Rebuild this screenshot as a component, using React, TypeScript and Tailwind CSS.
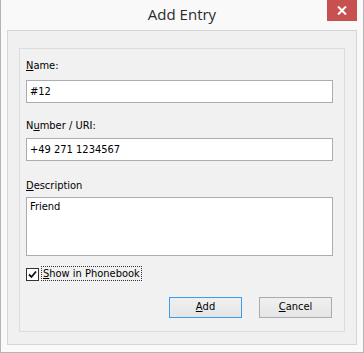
import { FC, ReactNode } from 'react';

const font = { fontFamily: '"DejaVu Sans Condensed", "Liberation Sans", Arial, sans-serif' };

const Label: FC<{ children: ReactNode; className?: string }> = ({ children, className }) => (
  <div className={`h-[14px] text-[11px] leading-[14px] text-black ${className ?? ''}`}>{children}</div>
);

const Field: FC<{ value: string; className?: string }> = ({ value, className }) => (
  <div
    className={`h-[23px] w-[307px] border border-[#abadb3] bg-white px-[3px] text-[11px] leading-[21px] text-black ${className ?? ''}`}
  >
    {value}
  </div>
);

const App: FC = () => {
  return (
    <div
      className="flex h-[353px] w-[364px] flex-col border-x border-b border-[#b4b4b4] bg-[#f9f9f9]"
      style={font}
    >
      <div className="grid h-[30px] grid-cols-[1fr_auto_1fr]">
        <div />
        <div
          className="pt-[4px] text-[15px] leading-[20px] text-[#2b2b2b]"
          style={{ fontFamily: '"Open Sans", "Noto Sans", sans-serif' }}
        >
          Add Entry
        </div>
        <div className="flex justify-end pr-[6px]">
          <div className="flex h-[21px] w-[30px] items-center justify-center bg-[#c75050]">
            <svg width="10" height="9" viewBox="0 0 10 9">
              <path d="M1 0.5 L9 8.5 M9 0.5 L1 8.5" stroke="white" strokeWidth="2" />
            </svg>
          </div>
        </div>
      </div>

      <div className="mx-[6px] mb-[7px] flex-1 border border-[#d5d5d5] bg-[#f0f0f0] px-[11px] pb-[12px] pt-[17px]">
        <div className="h-full border border-[#dcdcdc] bg-[#f1f1f1] pl-[6px] pr-[11px] pt-[10px]">
          <Label>
            <span className="underline">N</span>ame:
          </Label>
          <Field value="#12" className="mt-[7px]" />

          <Label className="mt-[16px]">
            N<span className="underline">u</span>mber / URI:
          </Label>
          <Field value="+49 271 1234567" className="mt-[5px]" />

          <Label className="mt-[18px]">
            <span className="underline">D</span>escription
          </Label>
          <div className="mt-[4px] h-[59px] w-[307px] border border-[#abadb3] bg-white px-[3px] pt-[2px] text-[11px] leading-[14px] text-black">
            Friend
          </div>

          <div className="mt-[10px] flex h-[15px] items-center gap-[2px]">
            <div className="mt-[2px] flex h-[13px] w-[13px] items-center justify-center border border-[#333333] bg-white">
              <svg width="9" height="9" viewBox="0 0 9 9">
                <path d="M1 4.5 L3.5 7 L8 1.5" fill="none" stroke="#111" strokeWidth="1.8" />
              </svg>
            </div>
            <div className="h-[15px] border border-dotted border-[#333] px-[1px] text-[11px] leading-[13px] text-black">
              <span className="underline">S</span>how in Phonebook
            </div>
          </div>

          <div className="mt-[16px] flex justify-end gap-[17px] pr-[1px]">
            <div className="flex h-[21px] w-[73px] items-center justify-center border border-[#3c9cf5] bg-gradient-to-b from-[#f0f0f0] to-[#e5e5e5] text-[11px] text-black">
              <span className="underline">A</span>dd
            </div>
            <div className="flex h-[21px] w-[73px] items-center justify-center border border-[#acacac] bg-gradient-to-b from-[#f0f0f0] to-[#e5e5e5] text-[11px] text-black">
              <span className="underline">C</span>ancel
            </div>
          </div>
        </div>
      </div>
    </div>
  );
};

export default App;
